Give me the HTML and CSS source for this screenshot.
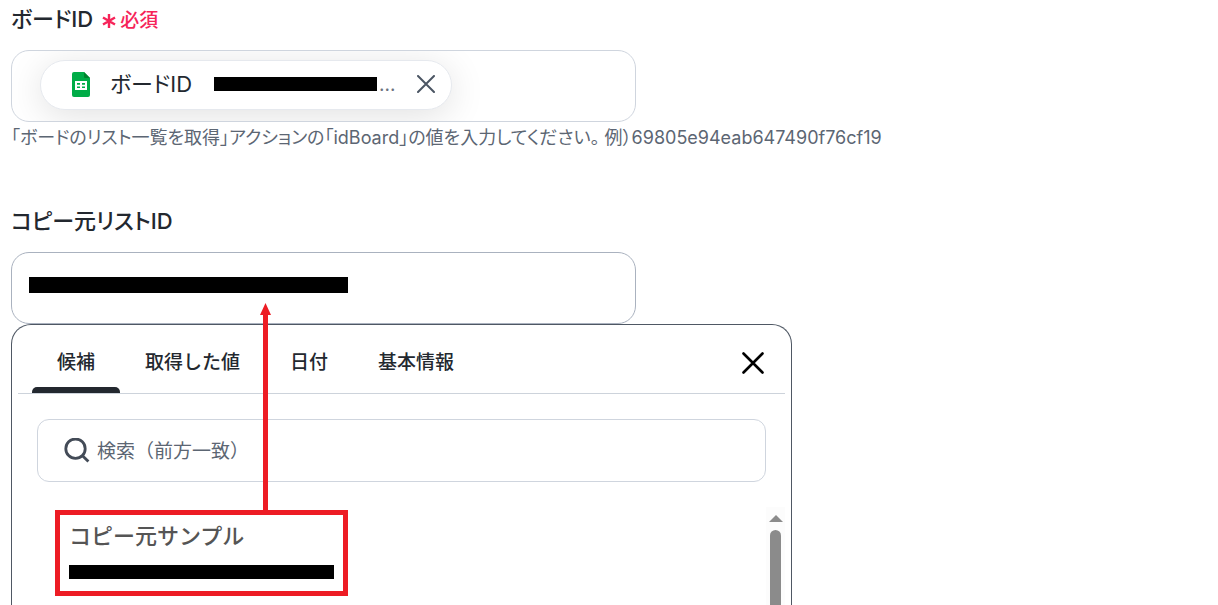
FILE: index.html
```html
<!DOCTYPE html>
<html lang="ja">
<head>
<meta charset="utf-8">
<meta name="viewport" content="width=device-width, initial-scale=1">
<title>コピー元リストID</title>
<link rel="stylesheet" href="styles.css">
</head>
<body>
<main class="form">
  <section class="field">
    <div class="field-head">
      <label class="field-label" for="board-id">ボードID</label>
      <span class="required">
        <svg class="required-mark" viewBox="0 0 14 16" aria-hidden="true"><path d="M7 1v14M1 4.500l12 7M13 4.500l-12 7"/></svg>
        必須
      </span>
    </div>
    <div class="text-box chip-box" id="board-id" tabindex="0">
      <span class="chip">
        <svg class="sheet-icon" viewBox="0 0 18 25" aria-hidden="true">
          <path fill="#00ac47" d="M2 0h10l6 6v17a2 2 0 0 1-2 2H2a2 2 0 0 1-2-2V2a2 2 0 0 1 2-2z"/>
          <path fill="#00832d" d="M12 0l6 6h-5a1 1 0 0 1-1-1z"/>
          <path fill="#fff" fill-rule="evenodd" d="M3 9h12v9H3zM5 11v1.700h3V11zM10 11v1.700h3V11zM5 14.500V16h3v-1.500zM10 14.500V16h3v-1.500z"/>
        </svg>
        <span class="chip-name">ボードID</span>
        <span class="chip-value"><span class="redacted redacted-chip"></span>...</span>
        <button class="chip-remove" type="button" aria-label="削除">
          <svg viewBox="0 0 18 18" aria-hidden="true"><path d="M1 1l16 16M17 1L1 17"/></svg>
        </button>
      </span>
    </div>
    <p class="help">「ボードのリスト一覧を取得」アクションの「idBoard」の値を入力してください。 例）69805e94eab647490f76cf19</p>
  </section>

  <section class="field list-field">
    <div class="field-head">
      <label class="field-label" for="list-id">コピー元リストID</label>
    </div>
    <div class="text-box value-box" id="list-id" tabindex="0"><span class="redacted redacted-value"></span></div>

    <div class="panel">
      <div class="panel-head">
        <div class="tabs" role="tablist">
          <button class="tab active" type="button" role="tab" aria-selected="true">候補</button>
          <button class="tab" type="button" role="tab">取得した値</button>
          <button class="tab" type="button" role="tab">日付</button>
          <button class="tab" type="button" role="tab">基本情報</button>
        </div>
        <button class="panel-close" type="button" aria-label="閉じる">
          <svg viewBox="0 0 22 22" aria-hidden="true"><path d="M1.500 1.500l19 19M20.500 1.500l-19 19"/></svg>
        </button>
      </div>
      <label class="search">
        <svg class="search-icon" viewBox="0 0 26 26" aria-hidden="true"><circle cx="11.500" cy="10.700" r="9.700"/><path d="M18.200 17.400l6.200 6.200"/></svg>
        <input class="search-input" type="text" placeholder="検索（前方一致）" aria-label="検索（前方一致）">
      </label>
      <div class="results">
        <button class="option" type="button">
          <span class="option-name">コピー元サンプル</span>
          <span class="redacted redacted-option"></span>
          <svg class="arrow" viewBox="0 0 11 212" aria-hidden="true"><path d="M5.500 0L11 12H8v200H3V12H0z"/></svg>
        </button>
        <div class="scrollbar" aria-hidden="true">
          <span class="scroll-up"></span>
          <span class="scroll-thumb"></span>
        </div>
      </div>
    </div>
  </section>
</main>
</body>
</html>
```
FILE: styles.css
```css
* {
  box-sizing: border-box;
}

body {
  margin: 0;
  background: #fff;
  color: #23282f;
  font-family: Inter, "Noto Sans CJK JP", sans-serif;
  font-size: 19px;
}

button,
input {
  font: inherit;
  color: inherit;
}

button {
  padding: 0;
  border: 0;
  background: none;
}

.form {
  display: flex;
  flex-direction: column;
  height: 100vh;
  padding-left: 11px;
  overflow: hidden;
}

.field {
  display: flex;
  flex-direction: column;
}

.field-head {
  display: flex;
  align-items: center;
  gap: 9px;
  height: 50px;
  padding-bottom: 12px;
}

.field-label {
  font-size: 22px;
  font-weight: 500;
  line-height: 32px;
  font-feature-settings: "palt";
}

.required {
  display: flex;
  align-items: center;
  gap: 4px;
  padding-bottom: 2px;
  color: #f62459;
  font-weight: 500;
}

.required-mark {
  width: 14px;
  height: 16px;
  margin-top: 6px;
  fill: none;
  stroke: currentColor;
  stroke-width: 2.4;
}

.text-box {
  display: flex;
  align-items: center;
  width: 100%;
  max-width: 625px;
  height: 72px;
  border: 1px solid #cfd5de;
  border-radius: 18px;
  background: #fff;
}

.chip-box {
  padding: 0 28px;
  padding-bottom: 2px;
  overflow: hidden;
}

.value-box {
  padding: 0 17px;
  padding-bottom: 6px;
  border-color: #aab2bf;
}

.chip {
  display: flex;
  align-items: center;
  height: 50px;
  padding: 0 15px 2px 31px;
  border: 1px solid #e6e9ee;
  border-radius: 25px;
  background: #fff;
  box-shadow: 0 6px 36px rgba(0, 0, 0, 0.12);
}

.sheet-icon {
  width: 18px;
  height: 25px;
}

.chip-name {
  margin-left: 20px;
  font-size: 22px;
  line-height: 32px;
  font-feature-settings: "palt";
}

.chip-value {
  display: flex;
  align-items: center;
  margin-left: 22px;
  color: #6b7280;
}

.redacted {
  display: block;
  background: #000;
}

.redacted-chip {
  width: 163px;
  height: 14px;
  margin-right: 2px;
}

.chip-remove {
  display: flex;
  margin-left: 20px;
  padding: 1px;
}

.chip-remove svg {
  width: 18px;
  height: 18px;
  fill: none;
  stroke: #4b5563;
  stroke-width: 2;
  stroke-linecap: round;
}

.help {
  margin: 0;
  padding-top: 2px;
  color: #5c6673;
  font-size: 18px;
  line-height: 28px;
  font-feature-settings: "palt";
}

.list-field {
  flex: 1;
  margin-top: 50px;
}

.redacted-value {
  width: 319px;
  height: 16px;
}

.panel {
  display: flex;
  flex: 1;
  flex-direction: column;
  width: 100%;
  max-width: 781px;
  padding: 0 6px;
  border: 1px solid #4f5864;
  border-bottom: 0;
  border-radius: 20px 20px 0 0;
  background: #fff;
}

.panel-head {
  display: flex;
  align-items: stretch;
  justify-content: space-between;
  height: 69px;
  padding: 0 21px 0 14px;
  border-bottom: 1px solid #cdd3db;
}

.tabs {
  display: flex;
}

.tab {
  position: relative;
  padding: 3px 25px 0;
  font-weight: 500;
}

.tab.active::after {
  position: absolute;
  right: 0;
  bottom: 0;
  left: 0;
  height: 6px;
  border-radius: 5px 5px 0 0;
  background: #23282f;
  content: "";
}

.panel-close {
  display: flex;
  align-items: center;
  padding-top: 7px;
}

.panel-close svg {
  width: 22px;
  height: 22px;
  fill: none;
  stroke: #000;
  stroke-width: 2.6;
  stroke-linecap: round;
}

.search {
  display: flex;
  align-items: center;
  gap: 7px;
  height: 63px;
  margin: 25px 19px;
  padding: 0 26px;
  border: 1px solid #cfd5de;
  border-radius: 12px;
}

.search-icon {
  width: 26px;
  height: 26px;
  fill: none;
  stroke: #434b57;
  stroke-width: 2.8;
}

.search-input {
  flex: 1;
  min-width: 0;
  padding: 2px 0 0;
  border: 0;
  outline: 0;
  background: none;
}

.search-input::placeholder {
  color: #5c6673;
  opacity: 1;
}

.results {
  display: flex;
  flex: 1;
  align-items: flex-start;
  justify-content: space-between;
  padding-left: 37px;
}

.option {
  position: relative;
  display: flex;
  flex-direction: column;
  gap: 13px;
  width: 293px;
  height: 86px;
  margin-top: 3px;
  padding: 5px 9px;
  border: 5px solid #ed1c24;
  text-align: left;
}

.option-name {
  color: #555;
  font-size: 22px;
  font-weight: 500;
  line-height: 32px;
}

.redacted-option {
  width: 265px;
  height: 14px;
}

.arrow {
  position: absolute;
  bottom: 100%;
  left: 200px;
  width: 11px;
  height: 212px;
  fill: #ed1c24;
}

.scrollbar {
  display: flex;
  flex-direction: column;
  align-items: center;
  align-self: stretch;
  gap: 8px;
  width: 19px;
  padding-top: 8px;
  background: #fcfcfc;
}

.scroll-up {
  border: 7px solid transparent;
  border-top: 0;
  border-bottom-color: #8b8b8b;
}

.scroll-thumb {
  flex: 1;
  width: 11px;
  border-radius: 6px 6px 0 0;
  background: #8b8b8b;
}
```
